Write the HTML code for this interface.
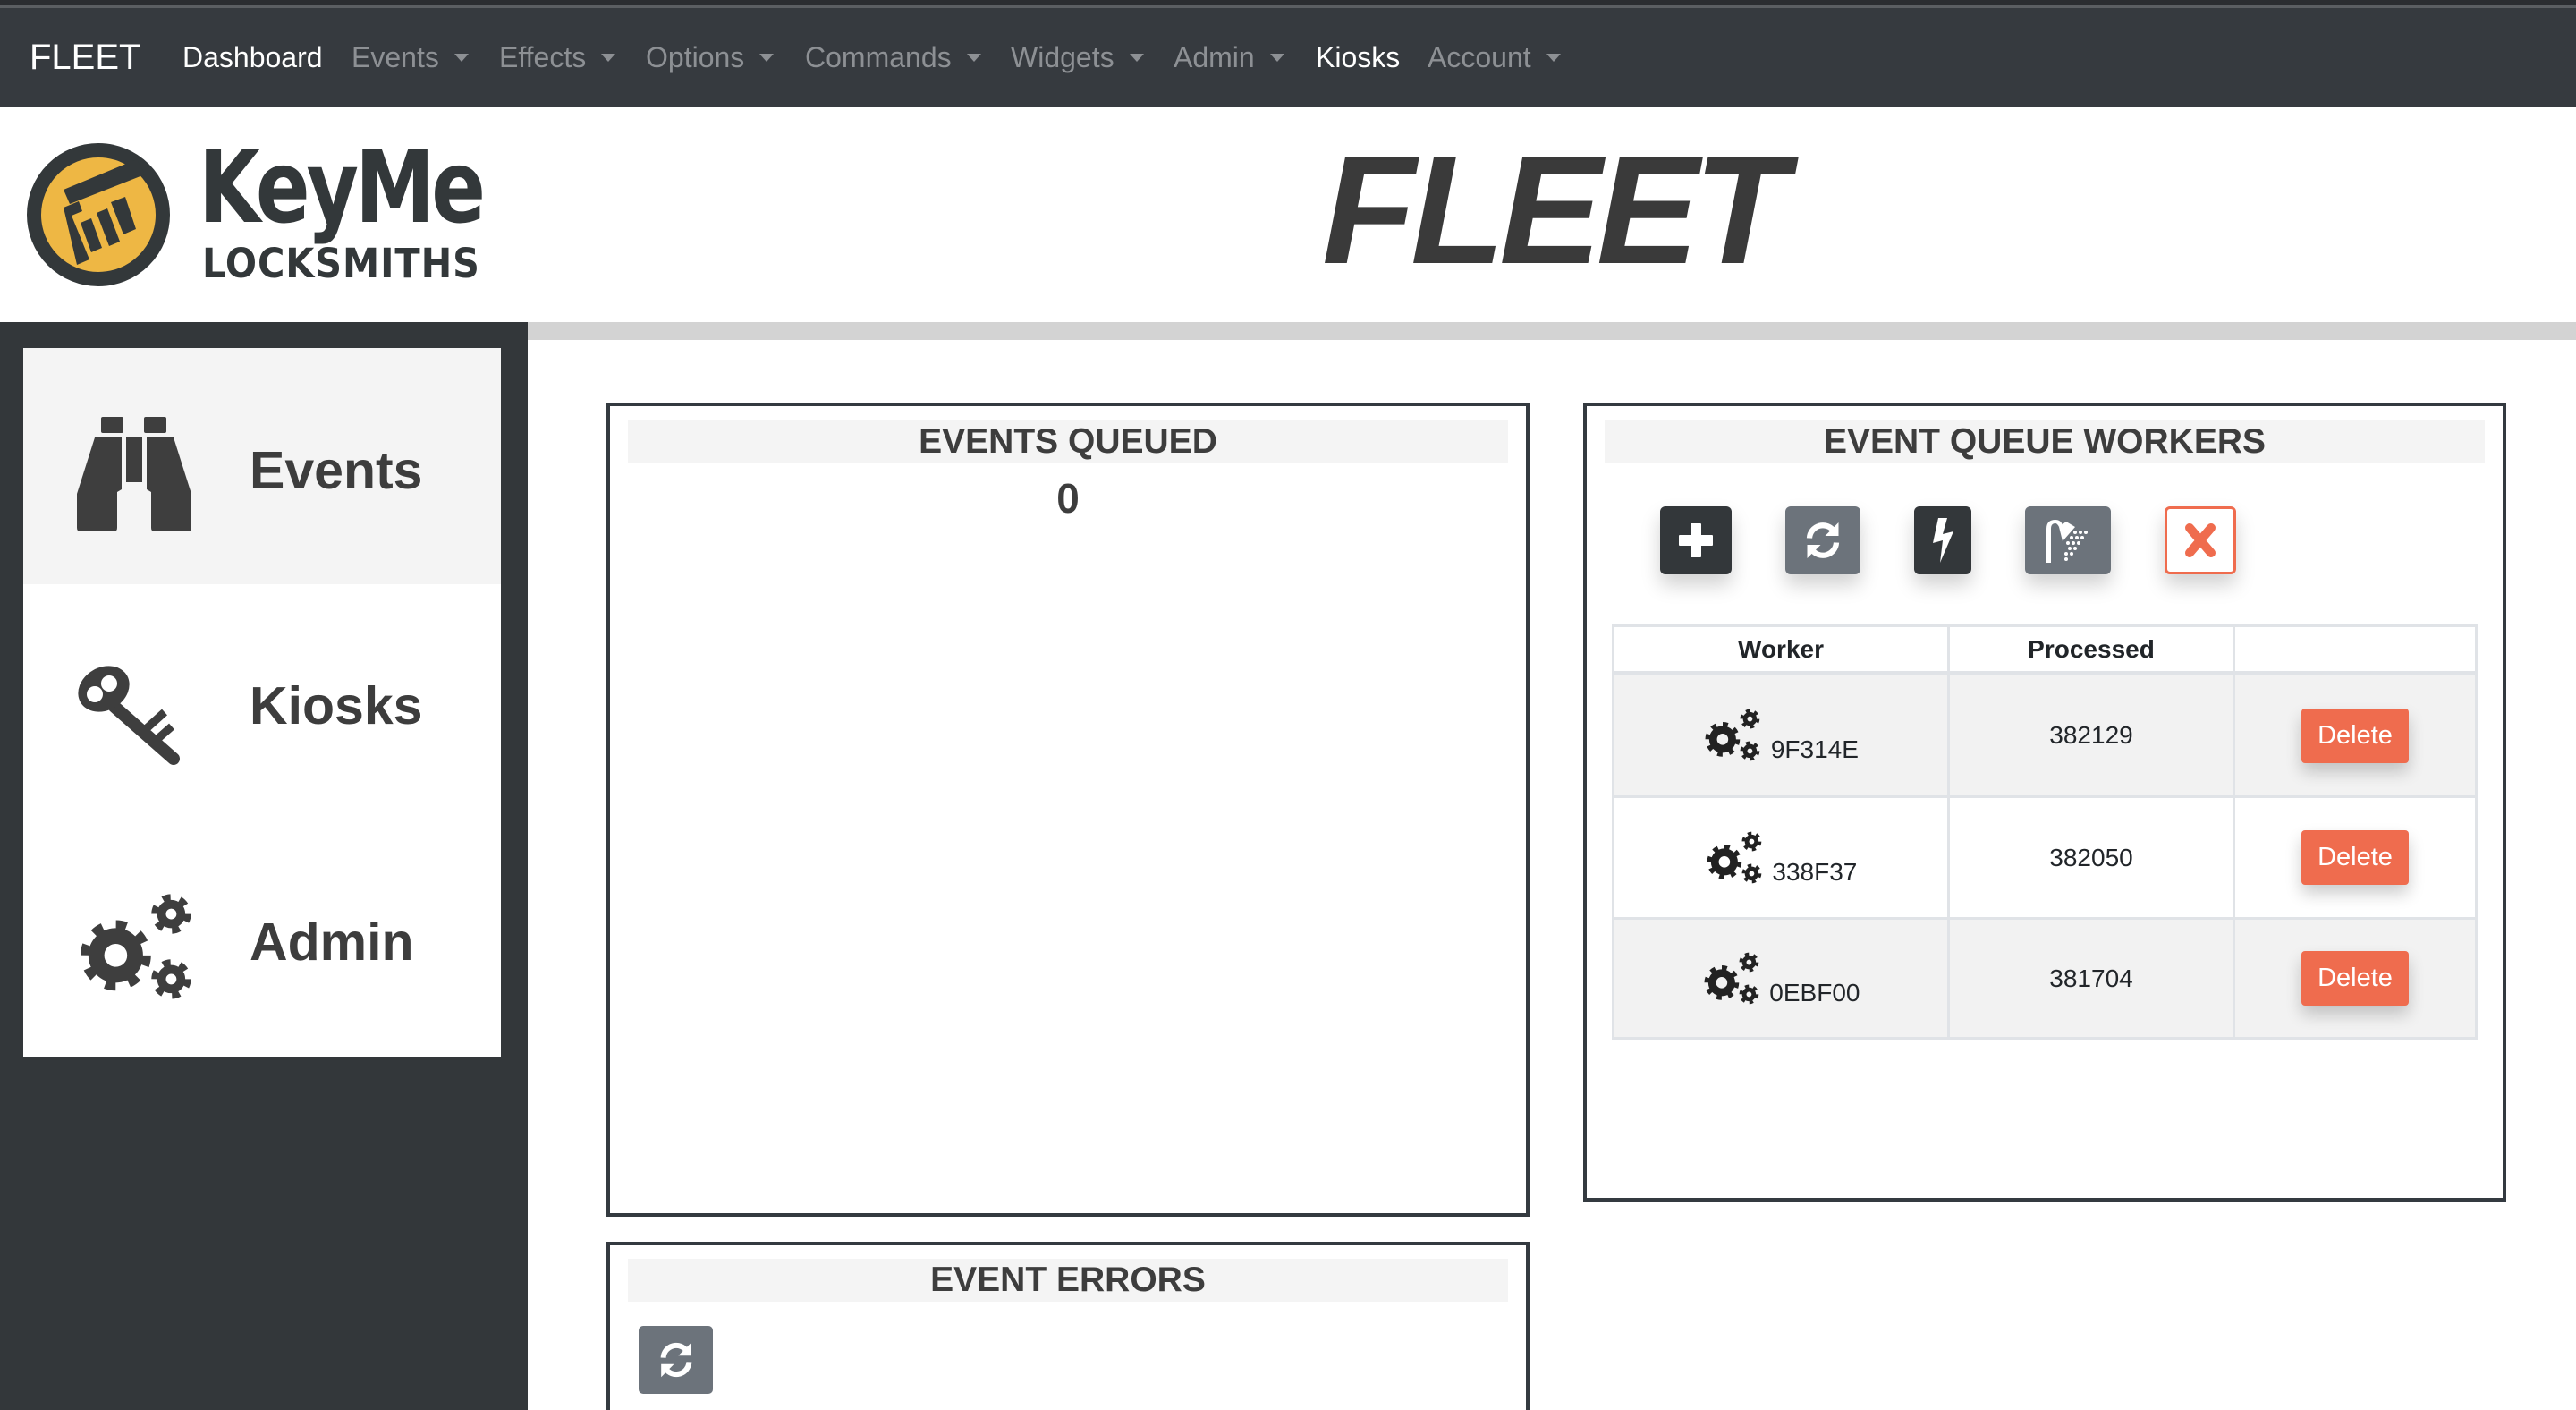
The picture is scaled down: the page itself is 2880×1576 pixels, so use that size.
<!DOCTYPE html>
<html style="width:2880px;height:1576px;overflow:hidden"><head><meta charset="utf-8"><style>
*{margin:0;padding:0;box-sizing:border-box}
body{width:2880px;height:1576px;overflow:hidden;background:#fff;font-family:"Liberation Sans",Arial,sans-serif;position:relative}
.a{position:absolute}
.nav{left:0;top:0;width:2880px;height:120px;background:#363a3f}
.nav .strip{left:0;top:0;width:2880px;height:9px;background:#2b2d31;border-bottom:3px solid #5b5e62}
.ni{position:absolute;top:44px;font-size:32px;line-height:40px;color:#8d9094;white-space:nowrap}
.ni.w{color:#fff}
.car{display:inline-block;width:0;height:0;border-left:8px solid transparent;border-right:8px solid transparent;border-top:9px solid #8d9094;margin-left:17px;vertical-align:6px}
.box{border:4px solid #343a40;background:#fff}
.hd{background:#f4f4f4;text-align:center;font-weight:bold;font-size:39px;color:#3d3d3d;line-height:48px;height:48px}
.btn{position:absolute;top:566px;height:76px;border-radius:6px;box-shadow:0 12px 22px rgba(0,0,0,.18);display:flex;align-items:center;justify-content:center}
table{border-collapse:collapse;position:absolute;left:1802px;top:698px;width:968px;font-size:28px;color:#212529}
td,th{border:3px solid #e0e3e7;text-align:center;vertical-align:middle}
th{height:53px;font-weight:bold;border-bottom-width:5px}
.del{display:inline-block;background:#ef6c4e;color:#fff;font-size:29px;width:120px;height:61px;line-height:61px;border-radius:4px;box-shadow:0 10px 18px rgba(0,0,0,.2)}
.side{font-size:59px;font-weight:bold;color:#3d3d3d;position:absolute;left:279px}
</style></head><body>
<svg width="0" height="0" style="position:absolute">
<defs>
<symbol id="gears" viewBox="0 0 140 130">
<g fill="none" stroke="currentColor">
<circle cx="45" cy="75" r="22" stroke-width="18"/>
<circle cx="45" cy="75" r="35" stroke-width="10" stroke-dasharray="12 15.49"/>
<circle cx="108" cy="28" r="11" stroke-width="10"/>
<circle cx="108" cy="28" r="19" stroke-width="7" stroke-dasharray="9 10.9"/>
<circle cx="108" cy="102" r="11" stroke-width="10"/>
<circle cx="108" cy="102" r="19" stroke-width="7" stroke-dasharray="9 10.9"/>
</g>
</symbol>
<symbol id="refresh" viewBox="0 0 40 40">
<g fill="none" stroke="#fff" stroke-width="5">
<path d="M8 18 A12 12 0 0 1 30 12"/>
<path d="M32 22 A12 12 0 0 1 10 28"/>
</g>
<path d="M34 4 L34 16 L22 16 Z" fill="#fff"/>
<path d="M6 36 L6 24 L18 24 Z" fill="#fff"/>
</symbol>
</defs>
</svg>

<div class="a nav"><div class="a strip"></div>
<div class="ni w" style="left:33px;top:42px;font-size:40px;line-height:44px">FLEET</div>
<div class="ni w" style="left:204px">Dashboard</div>
<div class="ni" style="left:393px">Events<span class="car"></span></div>
<div class="ni" style="left:558px">Effects<span class="car"></span></div>
<div class="ni" style="left:722px">Options<span class="car"></span></div>
<div class="ni" style="left:900px">Commands<span class="car"></span></div>
<div class="ni" style="left:1130px">Widgets<span class="car"></span></div>
<div class="ni" style="left:1312px">Admin<span class="car"></span></div>
<div class="ni w" style="left:1471px">Kiosks</div>
<div class="ni" style="left:1596px">Account<span class="car"></span></div>
</div>

<svg class="a" style="left:28px;top:158px" width="164" height="164" viewBox="0 0 164 164">
<circle cx="82" cy="82" r="72" fill="#eeb744" stroke="#33383a" stroke-width="16"/>
<g fill="#33383a">
<path d="M43 54 L125 20 L134 37 L50 70 Z"/>
<path d="M43 74 L60 67 L64 78 L52 83 L72 132 L58 138 Z"/>
<path d="M62 91 L74 86 L86 119 L74 124 Z"/>
<path d="M80 80 L92 75 L106 112 L94 117 Z"/>
<path d="M96 68 L112 62 L124 98 L110 104 Z"/>
</g>
</svg>
<div class="a" style="left:222px;top:150px;font-size:112px;font-weight:bold;color:#33383a;letter-spacing:-5px;line-height:120px;font-family:'DejaVu Sans','Liberation Sans',sans-serif;transform:scaleX(0.8);transform-origin:left">KeyMe</div>
<div class="a" style="left:226px;top:270px;font-size:45px;font-weight:bold;color:#33383a;line-height:50px;letter-spacing:1px;font-family:'DejaVu Sans','Liberation Sans',sans-serif;transform:scaleX(0.92);transform-origin:left">LOCKSMITHS</div>

<div class="a" style="left:1478px;top:145px;font-size:172px;font-weight:bold;font-style:italic;color:#3a3a3a;line-height:180px;letter-spacing:-6px">FLEET</div>

<div class="a" style="left:590px;top:360px;width:2290px;height:20px;background:#d3d3d3"></div>
<div class="a" style="left:0;top:360px;width:590px;height:1216px;background:#33373a"></div>
<div class="a" style="left:26px;top:389px;width:534px;height:792px;background:#fff"></div>
<div class="a" style="left:26px;top:389px;width:534px;height:264px;background:#f4f4f4"></div>

<svg class="a" style="left:84px;top:464px" width="132" height="132" viewBox="84 464 132 132" fill="#3e3e3e">
<rect x="113" y="466" width="25" height="18" rx="2"/>
<rect x="161" y="466" width="25" height="18" rx="2"/>
<path d="M106 489 L136 489 L136 547 L131 550 L131 590 Q131 594 127 594 L90 594 Q86 594 86 590 L86 552 Z"/>
<path d="M194 489 L164 489 L164 547 L169 550 L169 590 Q169 594 173 594 L210 594 Q214 594 214 590 L214 552 Z"/>
<rect x="141" y="489" width="18" height="50"/>
</svg>
<div class="side" style="top:492px">Events</div>

<svg class="a" style="left:84px;top:738px" width="124" height="118" viewBox="0 0 124 118">
<g stroke="#3e3e3e" stroke-linecap="round" fill="none">
<line x1="44" y1="52" x2="110" y2="110" stroke-width="14"/>
<line x1="80" y1="76" x2="100" y2="58" stroke-width="9" stroke-linecap="butt"/>
<line x1="92" y1="88" x2="108" y2="74" stroke-width="9" stroke-linecap="butt"/>
</g>
<ellipse cx="32" cy="32" rx="30" ry="24" transform="rotate(-30 32 32)" fill="#3e3e3e"/>
<circle cx="22" cy="38" r="9" fill="#fff"/>
<circle cx="38" cy="26" r="9" fill="#fff"/>
</svg>
<div class="side" style="top:755px">Kiosks</div>

<svg class="a" style="left:84px;top:994px;color:#3e3e3e" width="140" height="128"><use href="#gears"/></svg>
<div class="side" style="top:1019px">Admin</div>

<div class="a box" style="left:678px;top:450px;width:1032px;height:910px">
<div class="hd" style="margin:16px 20px 0">EVENTS QUEUED</div>
<div style="text-align:center;font-size:46px;font-weight:bold;color:#3d3d3d;margin-top:12px">0</div>
</div>

<div class="a box" style="left:678px;top:1388px;width:1032px;height:188px;border-bottom:none">
<div class="hd" style="margin:15px 20px 0">EVENT ERRORS</div>
</div>
<div class="a" style="left:714px;top:1482px;width:83px;height:76px;background:#6c737b;border-radius:5px;display:flex;align-items:center;justify-content:center"><svg width="48" height="48"><use href="#refresh"/></svg></div>

<div class="a box" style="left:1770px;top:450px;width:1032px;height:893px">
<div class="hd" style="margin:16px 20px 0">EVENT QUEUE WORKERS</div>
</div>
<div class="btn" style="left:1856px;width:80px;background:#33373a"><svg width="44" height="44" viewBox="0 0 44 44"><path d="M17 4h10v13h13v10H27v13H17V27H4V17h13z" fill="#fff" stroke="#fff" stroke-width="2" stroke-linejoin="round"/></svg></div>
<div class="btn" style="left:1996px;width:84px;background:#6c737b"><svg width="50" height="50"><use href="#refresh"/></svg></div>
<div class="btn" style="left:2140px;width:64px;background:#33373a"><svg width="30" height="54" viewBox="0 0 30 54"><path d="M10 2 L20 2 L15 20 L27 17 L12 52 L15 27 L4 30 Z" fill="#fff"/></svg></div>
<div class="btn" style="left:2264px;width:96px;background:#6c737b"><svg width="64" height="54" viewBox="0 0 64 54" fill="#fff"><path d="M8 52 L8 14 Q8 4 18 4 Q24 4 26 10 L22 12 Q20 8 18 8 Q13 8 13 14 L13 52 Z"/><path d="M22 12 L30 6 L40 12 L26 28 Z"/><g><circle cx="40" cy="18" r="2"/><circle cx="46" cy="18" r="2"/><circle cx="52" cy="18" r="2"/><circle cx="36" cy="24" r="2"/><circle cx="42" cy="24" r="2"/><circle cx="48" cy="24" r="2"/><circle cx="32" cy="30" r="2"/><circle cx="38" cy="30" r="2"/><circle cx="44" cy="30" r="2"/><circle cx="34" cy="36" r="2"/><circle cx="40" cy="36" r="2"/><circle cx="30" cy="42" r="2"/><circle cx="36" cy="42" r="2"/><circle cx="30" cy="48" r="2"/></g></svg></div>
<div class="btn" style="left:2420px;width:80px;background:#fff;border:3px solid #ef6c4e"><svg width="40" height="44" viewBox="0 0 40 44"><path d="M8 8 L32 36 M32 8 L8 36" stroke="#ef6c4e" stroke-width="10" stroke-linecap="round"/></svg></div>

<table>
<tr><th style="width:375px">Worker</th><th style="width:319px">Processed</th><th></th></tr>
<tr style="height:138px;background:#f2f2f2"><td><svg width="68" height="63" style="color:#222;vertical-align:-6px"><use href="#gears"/></svg> 9F314E</td><td>382129</td><td><span class="del">Delete</span></td></tr>
<tr style="height:136px"><td><svg width="68" height="63" style="color:#222;vertical-align:-6px"><use href="#gears"/></svg> 338F37</td><td>382050</td><td><span class="del">Delete</span></td></tr>
<tr style="height:134px;background:#f2f2f2"><td><svg width="68" height="63" style="color:#222;vertical-align:-6px"><use href="#gears"/></svg> 0EBF00</td><td>381704</td><td><span class="del">Delete</span></td></tr>
</table>
</body></html>
